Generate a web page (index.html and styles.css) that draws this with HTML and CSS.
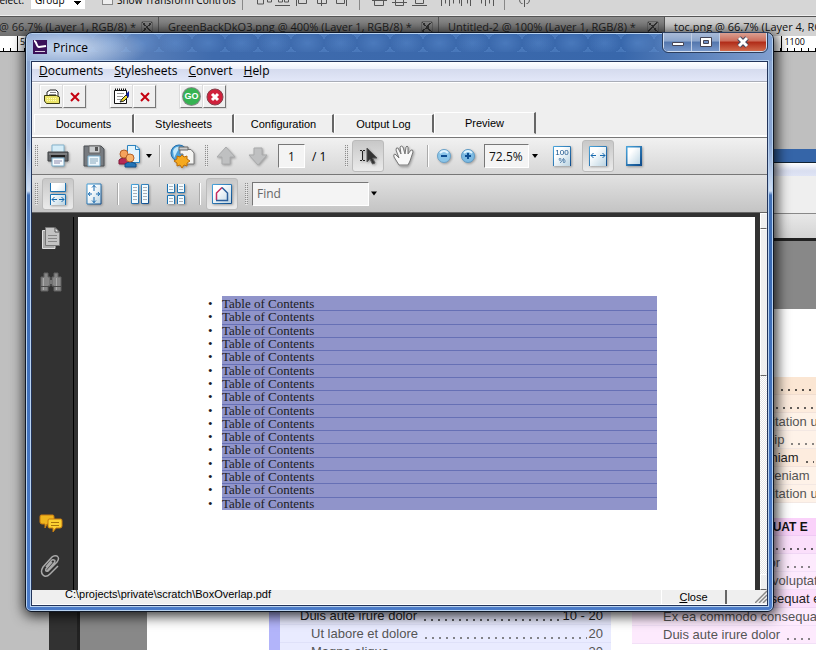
FILE: index.html
```html
<!DOCTYPE html>
<html lang="en">
<head>
<meta charset="utf-8">
<title>Prince</title>
<link rel="stylesheet" href="styles.css">
</head>
<body>
<div class="desktop">
  <div class="editor">
    <div class="options">
      <label for="pick">Select:</label>
      <select id="pick"><option>Group</option></select>
      <label class="check"><input type="checkbox"> Show Transform Controls</label>
      <svg class="align-icons" width="330" height="28" viewBox="0 0 330 28" fill="none" stroke="#555">
        <path d="M9.500 0V22M126.500 0V22M271.500 0V22" stroke="#888"/>
        <path d="M30.500 8V16H24.500V8M38.500 8V14H34.500V8M42 17.500H57M45.500 8V14H49.500V8M51.500 8V14H55.500V8M63.500 8V18M65.500 10.500H73.500V15.500H65.500ZM88.500 8V18M84.500 10.500H93.500V15.500H84.500ZM113.500 8V18M103.500 10.500H111.500V15.500H103.500ZM139 12.500H154M141.500 12V17.500H150.500V12M159 14.500H174M162.500 11.500H170.500V17.500H162.500ZM179 17.500H194M182.500 10.500H190.500V15.500H182.500ZM208.500 8V18M208.500 10.500H212.500V15.500M216.500 8V18M216.500 10.500H220.500V15.500M228.500 8V18M226.500 15.500V10.500H231.500M237.500 8V18M234.500 15.500V10.500H239.500M252.500 8V18M248.500 15.500V10.500H252.500M260.500 8V18M256.500 15.500V10.500H260.500M291.500 10V19M286.500 10.500Q286.500 16 289.500 15.500M296.500 10.500Q296.500 16 293.500 15.500"/>
      </svg>
    </div>
    <div class="tabs">
      <div class="tab first"><span>toc.png @ 66.7% (Layer 1, RGB/8) *</span><button class="x" aria-label="Close tab"></button></div>
      <div class="tab second"><span>GreenBackDkO3.png @ 400% (Layer 1, RGB/8) *</span><button class="x" aria-label="Close tab"></button></div>
      <div class="tab third"><span>Untitled-2 @ 100% (Layer 1, RGB/8) *</span><button class="x" aria-label="Close tab"></button></div>
      <div class="tab active"><span>toc.png @ 66.7% (Layer 4, RGB/8) *</span></div>
    </div>
    <div class="ruler"><span>50</span><span>1100</span></div>
    <div class="canvas">
      <div class="art">
        <div class="art-title"></div>
        <div class="art-menu"></div>
        <div class="art-tools"></div>
        <div class="art-ribbon"></div>
        <div class="art-body">
          <div class="art-side"></div>
          <div class="art-page">
            <div class="toc blue">
              <p class="l1"><span>Duis aute irure dolor</span><i></i><b>10 - 20</b></p>
              <p class="l2"><span>Ut labore et dolore</span><i></i><b>20</b></p>
              <p class="l2"><span>Magna aliqua</span><i></i><b>20</b></p>
            </div>
            <div class="right">
              <div class="toc orange">
                <p class="l0"><span>UT ENIM AD MINIM M</span><i></i></p>
                <p class="l1"><span>Lorem ipsum</span><i></i></p>
                <p class="l2"><span>Quis nostrud exercitation ullamco</span></p>
                <p class="l2"><span>Laboris nisi ut aliquip</span><i></i></p>
                <p class="l1"><span>Ut enim ad minim veniam</span><i></i></p>
                <p class="l2"><span>Ut enim ad minim veniam</span><i></i></p>
                <p class="l2"><span>Quis nostrud exercitation ullamco</span></p>
              </div>
              <div class="toc pink">
                <p class="l0"><span>COMMODO CONSEQUAT E</span><i></i></p>
                <p class="l1"><span>Lorem ipsum</span><i></i></p>
                <p class="l2"><span>Duis aute irure dolor</span><i></i></p>
                <p class="l2"><span>In reprehenderit in voluptate</span></p>
                <p class="l1"><span>Ex ea commodo consequat e</span></p>
                <p class="l2"><span>Ex ea commodo consequat</span></p>
                <p class="l2"><span>Duis aute irure dolor</span><i></i></p>
              </div>
            </div>
          </div>
        </div>
      </div>
    </div>
  </div>

  <div class="window">
    <div class="titlebar">
      <svg width="14" height="14" viewBox="0 0 14 14"><path fill="#3b1259" d="M0 0H14V14H0Z"/><path d="M1 1C4 1 3 7 6 7L13 6" fill="none" stroke="#fff" stroke-width="2"/><path d="M2 11.500H12" stroke="#d8cfe0"/></svg>
      <span class="name">Prince</span>
      <div class="caption">
        <button aria-label="Minimize"><svg width="12" height="12" viewBox="0 0 12 12"><path d="M.5 6.500H11.500V9.500H.5Z" fill="#fff" stroke="#445"/></svg></button>
        <button aria-label="Maximize"><svg width="12" height="12" viewBox="0 0 12 12"><path d="M.5 1.500H11.500V10.500H.5Z" fill="#fff" stroke="#445"/><path d="M3.500 4.500H8.500V7.500H3.500Z" fill="#6f8fc4" stroke="#445"/></svg></button>
        <button class="shut" aria-label="Close window"><svg width="14" height="12" viewBox="0 0 14 12"><path d="M3 2L11 10M11 2L3 10" stroke="#444a60" stroke-width="5"/><path d="M3 2L11 10M11 2L3 10" stroke="#fff" stroke-width="3"/></svg></button>
      </div>
    </div>
    <div class="client">
      <div class="menu">
        <a href="#"><u>D</u>ocuments</a><a href="#"><u>S</u>tylesheets</a><a href="#"><u>C</u>onvert</a><a href="#"><u>H</u>elp</a>
      </div>
      <div class="quick">
        <div class="pair">
          <button aria-label="Open document"><svg width="18" height="16" viewBox="0 0 18 16"><path d="M4 6V3L7 1H13L15 3V7" fill="#fff" stroke="#222"/><path d="M7 3.500H13M6 5.500H13" stroke="#888"/><path d="M1.500 6.500H13.500L16.500 8V14.500H3.500L1.500 12Z" fill="#ece56a" stroke="#3a3a10"/><path d="M4 9.500H14M4 11.500H14" stroke="#fffcc0" stroke-dasharray="1 1"/></svg></button>
          <button aria-label="Remove document"><svg width="10" height="10" viewBox="0 0 10 10"><path d="M1 1L9 9M9 1L1 9" stroke="#c40010" stroke-width="2"/></svg></button>
        </div>
        <div class="pair">
          <button aria-label="Add stylesheet"><svg width="18" height="17" viewBox="0 0 18 17"><path d="M1.500 2.500H13.500V15.500H1.500Z" fill="#fff" stroke="#111"/><path d="M2 1.500H14" stroke="#111" stroke-width="2" stroke-dasharray="1 1"/><path d="M4 5.500H11M4 8.500H10M4 11.500H8" stroke="#999"/><path d="M7 14L9 11L13 7L15 9L11 13Z" fill="#ecd82a" stroke="#222"/><path d="M13 6L16 3V8L15 10Z" fill="#1020a0"/></svg></button>
          <button aria-label="Remove stylesheet"><svg width="10" height="10" viewBox="0 0 10 10"><path d="M1 1L9 9M9 1L1 9" stroke="#c40010" stroke-width="2"/></svg></button>
        </div>
        <div class="pair">
          <button class="go" aria-label="Convert"><span>GO</span></button>
          <button aria-label="Stop"><svg width="18" height="18" viewBox="0 0 18 18"><circle cx="9" cy="9" r="8" fill="#d0213c" stroke="#84404a"/><path d="M6 6L12 12M12 6L6 12" stroke="#fff" stroke-width="3"/></svg></button>
        </div>
      </div>
      <div class="sheet-tabs">
        <button>Documents</button><button>Stylesheets</button><button>Configuration</button><button>Output Log</button><button class="on">Preview</button>
      </div>
      <div class="bar one">
        <i class="grip"></i>
        <button class="tool" aria-label="Print"><svg width="24" height="24" viewBox="0 0 24 24"><path d="M6 1H18V9H6Z" fill="#d5edf8" stroke="#85b4cd"/><path d="M2 8H22V17H2Z" fill="#626569" stroke="#3f4245"/><path d="M3 10H21" stroke="#999"/><path d="M5 12H19" stroke="#222" stroke-width="2"/><path d="M6 14H18V22H6Z" fill="#f8fcff" stroke="#76a9c6"/><path d="M8 17H16M8 19H14" stroke="#88a"/></svg></button>
        <button class="tool" aria-label="Save"><svg width="24" height="24" viewBox="0 0 24 24"><path d="M2 2H19L22 5V22H2Z" fill="#777b80" stroke="#4c5054"/><path d="M7 2H18V9H7Z" fill="#c9ccce" stroke="#666"/><path d="M13 3H16V7H13Z" fill="#555"/><path d="M6 12H18V22H6Z" fill="#eef7fc" stroke="#79afcf"/><path d="M8 15H16M8 17H16M8 19H14" stroke="#87a8bd"/></svg></button>
        <div class="split">
          <button class="tool" aria-label="Share"><svg width="24" height="24" viewBox="0 0 24 24"><path d="M9.500 1.500H18L21.500 5V18.500H9.500Z" fill="#e3f4fc" stroke="#2b83c0"/><path d="M17.500 1.500V5.500H21.500" fill="none" stroke="#2b83c0"/><path d="M1 20V16Q5 12 10 16V20Z" fill="#b72a54" stroke="#801b3a"/><circle cx="6" cy="10" r="4" fill="#f5a35c" stroke="#b5622b"/><path d="M7 23V20Q12 16 18 20V23Z" fill="#2274b8" stroke="#144f87"/><circle cx="12" cy="14" r="4" fill="#f9b36a" stroke="#b5622b"/></svg></button>
          <button class="drop" aria-label="Share options"></button>
        </div>
        <i class="sep"></i>
        <button class="tool" aria-label="Create online"><svg width="26" height="25" viewBox="0 0 26 25"><circle cx="10" cy="9" r="8" fill="#4c9fd7" stroke="#226fae"/><path d="M4 7Q6 2 11 3L8 8L5 14Z" fill="#c2e8fa"/><path d="M11 5.500H22L25 9V20H14V10H11Z" fill="#f4f4f2" stroke="#777"/><path d="M10 3H19V6H10Z" fill="#ccc" stroke="#666"/><path d="M13 11L15 13L18 12L18 15L21 17L18 19V22L15 21L13 24L11 21L8 22V19L5 17L8 15V12L11 13Z" fill="#f5a91e" stroke="#ba6d09"/></svg></button>
        <i class="grip mid"></i>
        <button class="tool small" aria-label="Previous page"><svg width="20" height="20" viewBox="0 0 20 20"><path d="M10 1L19 11H14V18H6V11H1Z" fill="#bfc0c1" stroke="#a9aaab"/></svg></button>
        <button class="tool small" aria-label="Next page"><svg width="20" height="20" viewBox="0 0 20 20"><path d="M10 19L19 9H14V2H6V9H1Z" fill="#bfc0c1" stroke="#a9aaab"/></svg></button>
        <input class="field page-no" id="page" value="1">
        <label class="of" for="page">/ 1</label>
        <i class="grip mid"></i>
        <button class="tool pressed" aria-label="Select text"><svg width="20" height="18" viewBox="0 0 20 18"><path d="M2 3.500H4M5 3.500H7M4.500 4V13M2 13.500H4M5 13.500H7" stroke="#222"/><path d="M9 1V15L12 12L14.500 17L17 16L14.500 11H19Z" fill="#333" stroke="#555"/></svg></button>
        <button class="tool" aria-label="Hand tool"><svg width="24" height="24" viewBox="0 0 24 24"><path d="M7 21L2 13Q1 10 3 10L7 14L4 6Q4 3 6 4L9 10L8 3Q9 1 11 3L13 10L14 3Q15 1 16 3L16 10L19 6Q21 5 21 8L18 17L16 21Z" fill="#f8f8f8" stroke="#777"/><path d="M8 22H16" stroke="#aaa"/></svg></button>
        <i class="sep"></i>
        <button class="tool tiny" aria-label="Zoom out"><svg width="16" height="16" viewBox="0 0 16 16"><circle cx="8" cy="8" r="6.500" fill="#8cc6e9" stroke="#69a1c8"/><path d="M4 5Q8 1 12 5" stroke="#dff4ff" stroke-width="2" fill="none"/><path d="M5 8H11" stroke="#0e4f93" stroke-width="2"/></svg></button>
        <button class="tool tiny" aria-label="Zoom in"><svg width="16" height="16" viewBox="0 0 16 16"><circle cx="8" cy="8" r="6.500" fill="#7dbbe3" stroke="#5f9ac3"/><path d="M4 5Q8 1 12 5" stroke="#dff4ff" stroke-width="2" fill="none"/><path d="M5 8H11M8 5V11" stroke="#0e4f93" stroke-width="2"/></svg></button>
        <div class="split zoom">
          <input class="field" aria-label="Zoom" value="72.5%">
          <button class="drop" aria-label="Zoom levels"></button>
        </div>
        <button class="tool" aria-label="Actual size"><svg width="20" height="22" viewBox="0 0 20 22"><use href="#sheet"/><g class="hundred" text-anchor="middle"><text x="10" y="10">100</text><text x="10" y="18">%</text></g></svg></button>
        <button class="tool pressed" aria-label="Fit width"><svg width="20" height="22" viewBox="0 0 20 22"><use href="#sheet"/><path d="M3 10.500H8M5.500 8L3 10.500L5.500 13M12 10.500H17M14.500 8L17 10.500L14.500 13" fill="none" stroke="#1669ae"/></svg></button>
        <button class="tool" aria-label="Full page"><svg width="16" height="20" viewBox="0 0 16 20"><path d="M.5 .5H15V19H.5Z" fill="url(#paper)" stroke="url(#edge)" stroke-width="2"/></svg></button>
      </div>
      <div class="bar two">
        <i class="grip"></i>
        <button class="tool pressed" aria-label="Scrolling pages"><svg width="18" height="22" viewBox="0 0 18 22"><path d="M1.500 0V8.500H16.500V0M1.500 22V11.500H16.500V22" fill="url(#paper)" stroke="#1b73b4"/><path d="M3 16.500H8M5.500 14L3 16.500L5.500 19M10 16.500H15M12.500 14L15 16.500L12.500 19" fill="none" stroke="#1669ae"/></svg></button>
        <button class="tool" aria-label="One full page"><svg width="16" height="22" viewBox="0 0 16 22"><path d="M1 1H15V21H1Z" fill="url(#paper)" stroke="url(#edge)"/><path d="M8 2V8M6 4.500L8 2.500L10 4.500M8 20V14M6 17.500L8 19.500L10 17.500M2 11H6M4 9L2.500 11L4 13M14 11H10M12 9L13.500 11L12 13" fill="none" stroke="#1669ae"/></svg></button>
        <i class="sep"></i>
        <button class="tool" aria-label="Two pages"><svg width="18" height="22" viewBox="0 0 18 22"><path d="M.5 1.500H7.500V20.500H.5ZM10.500 1.500H17.500V20.500H10.500Z" fill="#f2fafe" stroke="url(#edge)"/><path d="M2 4.500H6M2 7.500H6M2 10.500H6M2 13.500H6M2 16.500H6M12 4.500H16M12 7.500H16M12 10.500H16M12 13.500H16M12 16.500H16" stroke="#a9b0b8"/></svg></button>
        <button class="tool" aria-label="Two pages scrolling"><svg width="18" height="22" viewBox="0 0 18 22"><path d="M.5 1V9.500H7.500V1M10.500 1V9.500H17.500V1M.5 21V12.500H7.500V21M10.500 21V12.500H17.500V21" fill="#f2fafe" stroke="#1b73b4"/><path d="M2 3.500H6M2 6.500H6M2 15.500H6M2 18.500H6M12 3.500H16M12 6.500H16M12 15.500H16M12 18.500H16" stroke="#a9b0b8"/></svg></button>
        <i class="sep"></i>
        <button class="tool pressed" aria-label="Page shape"><svg width="20" height="22" viewBox="0 0 20 22"><path d="M.5 1.500H19.500V20.500H.5Z" fill="url(#paper)" stroke="url(#edge)"/><path d="M4.500 17V10L10 4.500" fill="none" stroke="#c52b5f" stroke-width="1.500"/><path d="M10 4.500L15.500 10V17.500H4" fill="none" stroke="#2b5e9b" stroke-width="1.500"/></svg></button>
        <i class="grip mid"></i>
        <div class="split find">
          <input class="field" aria-label="Find" placeholder="Find">
          <button class="drop" aria-label="Find options"></button>
        </div>
      </div>
      <div class="viewer">
        <div class="side">
          <button aria-label="Pages"><svg width="20" height="24" viewBox="0 0 20 24"><path d="M1.500 4.500H14V22.500H1.500Z" fill="#aaa" stroke="#e0e0e0"/><path d="M4.500 1.500H14L18.500 6V19.500H4.500Z" fill="#c4c4c4" stroke="#777"/><path d="M14 1.500V6H18.500Z" fill="#eee" stroke="#555"/><path d="M7 9.500H16M7 12.500H16M7 15.500H16" stroke="#888"/></svg></button>
          <button aria-label="Search"><svg width="22" height="20" viewBox="0 0 22 20"><path d="M4 1H8V5H10V14H8V19H1V5H4ZM14 1H18V5H21V19H14V14H12V5H14Z" fill="#868686" stroke="#606060"/><path d="M3.500 6V18M16.500 6V18" stroke="#aaa"/><path d="M10 8H12V12H10Z" fill="#777"/><path d="M1 14.500H9M13 14.500H21" stroke="#4a4a4a"/></svg></button>
          <button class="low" aria-label="Comments"><svg width="24" height="20" viewBox="0 0 24 20"><path d="M2 1H14Q15 1 15 3V8Q15 10 13 10H8L6 14V10H3Q1 10 1 8V3Q1 1 2 1Z" fill="#efb51e" stroke="#c87a0e"/><path d="M10 5H22Q23 5 23 7V12Q23 14 21 14H17L14 18V14H10Q9 14 9 12V7Q9 5 10 5Z" fill="#fad032" stroke="#c87a0e"/><path d="M12 8.500H20M12 11.500H20" stroke="#a8740c"/></svg></button>
          <button aria-label="Attachments"><svg width="22" height="24" viewBox="0 0 22 24"><path d="M12 8L6 15Q5 18 8 17L17 8Q20 4 17 2Q14 1 12 3L3 13Q0 18 3 21Q6 24 10 20L18 12M7 17L14 9Q16 6 14 6Q12 5 11 7L6 13" fill="none" stroke="#aaa" stroke-width="1.500"/></svg></button>
        </div>
        <div class="paper">
          <ul>
            <li>Table of Contents</li><li>Table of Contents</li><li>Table of Contents</li><li>Table of Contents</li>
            <li>Table of Contents</li><li>Table of Contents</li><li>Table of Contents</li><li>Table of Contents</li>
            <li>Table of Contents</li><li>Table of Contents</li><li>Table of Contents</li><li>Table of Contents</li>
            <li>Table of Contents</li><li>Table of Contents</li><li>Table of Contents</li><li>Table of Contents</li>
          </ul>
        </div>
        <div class="scroll"><i class="up"></i><i class="thumb"></i><i class="down"></i></div>
      </div>
      <div class="status">
        <span>C:\projects\private\scratch\BoxOverlap.pdf</span>
        <button><u>C</u>lose</button>
        <svg width="12" height="13" viewBox="0 0 12 13"><path d="M0 13L12 1M4 13L12 5M8 13L12 9" stroke="#888" stroke-width="1.500"/></svg>
      </div>
    </div>
  </div>
</div>
<svg class="defs" width="0" height="0">
  <defs>
    <linearGradient id="paper" x1="0" y1="0" x2="1" y2="1"><stop offset="0.300" stop-color="#fff"/><stop offset="1" stop-color="#b9d3e2"/></linearGradient>
    <linearGradient id="edge" x1="0" y1="0" x2="1" y2="1"><stop offset="0" stop-color="#4aa5dc"/><stop offset="1" stop-color="#0f4c8c"/></linearGradient>
    <path id="sheet" d="M1.500 21V1.500H18.500V21" fill="url(#paper)" stroke="url(#edge)"/>
  </defs>
</svg>
</body>
</html>
```
FILE: styles.css
```css
* { box-sizing: border-box; }
html, body { height: 100%; }
body { margin: 0; font-family: "Open Sans", sans-serif; font-size: 12px; color: #000; }
button { padding: 0; border: 0; background: none; font: inherit; color: inherit; }
svg { display: block; flex: none; }
p, ul { margin: 0; padding: 0; }
.defs { position: absolute; }

.desktop { position: relative; height: 100vh; overflow: hidden; background: #bfbfbf; }

/* Image editor behind the window */
.editor { display: flex; flex-direction: column; height: 100%; }
.options { display: flex; align-items: center; flex: none; height: 29px; margin-top: -13px; padding-bottom: 3px; background: #d6d6d6; border-bottom: 1px solid #eee; font-size: 10px; overflow: hidden; }
.options > label:first-child { width: 31px; padding-left: 0; margin-left: -6px; margin-right: 6px; white-space: nowrap; }
.options select { appearance: none; width: 54px; height: 18px; padding: 0 4px; border: 0; border-radius: 0; font: inherit; color: #000; background: linear-gradient(#000, #000) 43px 10px / 7px 1px no-repeat, linear-gradient(#000, #000) 44px 11px / 5px 1px no-repeat, linear-gradient(#000, #000) 45px 12px / 3px 1px no-repeat, linear-gradient(#000, #000) 46px 13px / 1px 1px no-repeat, #fff; }
.check { display: flex; align-items: center; width: 131px; margin-left: 17px; white-space: nowrap; }
.check input { appearance: none; flex: none; width: 11px; height: 11px; margin: 0 4px 0 0; border: 1px solid #888; background: #eee; }
.align-icons { margin-top: 5px; }
.tabs { display: flex; flex: none; height: 20px; border-top: 1px solid #555; background: linear-gradient(#8c8c8c, #707070); font-size: 11px; line-height: 19px; color: #222; }
.tab { display: flex; align-items: center; gap: 5px; flex: none; padding: 0 5px 0 9px; border-right: 1px solid #555; overflow: hidden; white-space: nowrap; justify-content: space-between; }
.first { width: 159px; justify-content: flex-end; }
.second { width: 280px; }
.third { width: 226px; }
.active { flex: 1; background: #d2d2d2; color: #111; border: 0; }
.x { flex: none; width: 12px; height: 12px; border: 1px solid #666; border-radius: 2px; background: linear-gradient(45deg, transparent 45%, #333 45% 55%, transparent 55%), linear-gradient(-45deg, transparent 45%, #333 45% 55%, transparent 55%); }
.ruler { display: flex; justify-content: space-between; flex: none; height: 16px; padding: 0 11px 0 17px; border-bottom: 1px solid #000; background: repeating-linear-gradient(90deg, #000 0 1px, transparent 1px 7px) 3px 12px / 100% 4px no-repeat #fff; font-size: 9px; line-height: 12px; }
.ruler span { height: 15px; padding-left: 2px; border-left: 1px solid #000; }
.canvas { position: relative; flex: 1; overflow: hidden; background: #bfbfbf; }
.art { position: absolute; left: 49px; top: 97px; right: 0; bottom: 0; display: flex; flex-direction: column; background: #888; }
.art-title { flex: none; height: 14px; background: #3565a8; border-bottom: 1px solid #123; }
.art-menu { flex: none; height: 13px; background: linear-gradient(#fff, #d9def0 60%, #dfe4f5); }
.art-tools { flex: none; height: 38px; background: #efefef; border-bottom: 1px solid #888; }
.art-ribbon { flex: none; height: 27px; background: linear-gradient(#e8e8e8, #d4d4d4); border-bottom: 3px solid #222; }
.art-body { flex: 1; display: flex; min-height: 0; }
.art-side { width: 31px; background: #323232; border-right: 3px solid #222; }
.art-page { flex: 1; display: flex; align-items: flex-start; margin: 68px 0 0 67px; padding-left: 122px; background: #fff; overflow: hidden; }
.toc p { display: flex; height: 18px; padding-right: 8px; border-bottom: 1px solid rgba(120, 110, 180, .08); font: 13px/18px "Liberation Sans", sans-serif; color: #555; white-space: nowrap; }
.toc i { flex: 1; height: 2px; margin: 12px 2px 0 7px; background: repeating-linear-gradient(90deg, currentColor 0 2px, transparent 2px 7px); opacity: .7; }
.toc b { font-weight: inherit; }
.right p { padding-right: 0; }
.toc .l0 { padding-left: 20px; font-size: 12px; font-weight: bold; color: #111; }
.toc .l1 { padding-left: 20px; color: #222; }
.toc .l2 { padding-left: 31px; }
.blue { width: 342px; margin-top: 298px; background: #e9ebff; border-left: 11px solid #b2b4fa; }
.right { flex: 1; min-width: 0; margin: 68px 0 0 21px; }
.orange { background: #fef2e8; }
.orange .l0 { background: #fbe6d3; }
.orange .l1 { background: #fdecde; }
.pink { margin-top: 15px; background: #fdeafd; }
.pink .l0 { background: #fad2fa; }
.pink .l1 { background: #fbdffb; }

/* Application window */
.window { position: absolute; left: 25px; top: 32px; right: 42px; bottom: 38px; display: flex; flex-direction: column; padding: 0 5px 5px; border: 1px solid #101826; border-radius: 7px 7px 6px 6px; background: linear-gradient(#8aa4cd 0, #87a3d0 110px, #cfdef2 158px, #4472b6 162px, #3c6cb4 230px, #4b7bc8 100%); box-shadow: inset 0 0 0 1px #b8d2f0, 1px 2px 13px 2px rgba(0, 0, 0, .8); }
.titlebar { display: flex; align-items: flex-start; flex: none; height: 27px; margin: 1px -4px 0; padding: 6px 0 0 6px; border-radius: 5px 5px 0 0; background: radial-gradient(ellipse 80px 24px at 40px 14px, rgba(215, 228, 245, .9), transparent), repeating-radial-gradient(ellipse 17px 12px at 50% 9px, rgba(110, 160, 225, .3), transparent) 0 0 / 33px 18px repeat-x, linear-gradient(90deg, #7f9ccb 0, #3f6bad 25%, #3867ab 80%, #819fcf 100%); }
.name { margin-left: 6px; line-height: 15px; }
.caption { display: flex; margin: -7px 5px 0 auto; border: 1px solid #cfdcef; border-top: 0; border-radius: 0 0 5px 5px; outline: 1px solid #2c3e5e; overflow: hidden; }
.caption button { display: grid; place-items: center; width: 28px; height: 18px; border-right: 1px solid #c0cee4; background: linear-gradient(#a9bbd8, #8ba5cc 45%, #5376ad 50%, #7797c9); }
.caption .shut { width: 46px; border: 0; background: linear-gradient(#dba092, #cc6c5a 45%, #b02a17 50%, #cf6a4c); }
.client { display: flex; flex-direction: column; flex: 1; min-height: 0; border: 1px solid #22345a; outline: 1px solid #b8d2f0; background: #efefef; overflow: hidden; }
.menu { display: flex; flex: none; gap: 11px; height: 20px; padding: 0 7px; border-bottom: 1px solid #a9adb8; background: linear-gradient(#fff, #eef1fa 35%, #d5dbee 38%, #e2e7f8); line-height: 18px; }
.menu a { color: #000; text-decoration: none; }
.quick { display: flex; flex: none; gap: 24px; height: 31px; padding: 2px 8px; border-top: 1px solid #fff; }
.pair { display: flex; }
.pair button { display: grid; place-items: center; width: 23px; height: 23px; border: 1px solid; border-color: #fff #777 #777 #fff; box-shadow: 0 0 0 1px #ddd; }
.go span { width: 17px; height: 17px; border-radius: 50%; background: #36b352; box-shadow: 0 0 0 1px #888; color: #fff; font: bold 9px/17px "Liberation Sans", sans-serif; }
.sheet-tabs { display: flex; align-items: flex-end; flex: none; height: 24px; padding-left: 2px; border-bottom: 2px solid #fff; font: 11px "Liberation Sans", sans-serif; }
.sheet-tabs button { width: 100px; height: 19px; margin-bottom: 2px; border: 1px solid; border-color: #fff #666 transparent #fff; border-right-width: 2px; }
.sheet-tabs .on { width: 102px; height: 22px; margin-bottom: 1px; }
.bar { display: flex; align-items: center; flex: none; gap: 4px; padding-left: 3px; border-top: 1px solid #777; }
.one { height: 37px; background: linear-gradient(#f1f1f1, #d6d6d6); }
.two { height: 39px; border-bottom: 1px solid #666; background: linear-gradient(#e2e2e2, #c4c4c4); }
.grip { width: 3px; height: 22px; background: repeating-linear-gradient(transparent 0 1px, rgba(240, 240, 240, .8) 1px 2px), repeating-linear-gradient(90deg, #8e8e8e 0 1px, transparent 1px 2px); }
.mid { margin-left: 3px; }
.tool { display: grid; place-items: center; flex: none; width: 32px; height: 32px; border: 1px solid transparent; border-radius: 3px; }
.tool svg { filter: drop-shadow(1px 1px 1px rgba(0, 0, 0, .3)); }
.hundred { font: 8px "Liberation Sans", sans-serif; fill: #15518b; }
.small { width: 28px; }
.tiny { width: 20px; }
.pressed { border-color: #bbb; background: linear-gradient(#c8c8c8, #ebebeb); }
.sep { width: 2px; height: 22px; margin: 0 1px 0 3px; border-left: 1px solid #aaa; border-right: 1px solid #fff; }
.split { display: flex; align-items: center; }
.drop { width: 6px; height: 10px; background: #000; clip-path: polygon(0 3px, 100% 3px, 50% 7px); }
.field { height: 24px; padding: 0 4px; border: 1px solid; border-color: #777 #fff #fff #777; border-radius: 0; background: #f4f4f4; font: 12px "Open Sans", sans-serif; color: #111; }
.field::placeholder { color: #666; opacity: 1; }
.page-no { width: 27px; margin-left: 2px; text-align: center; }
.of { width: 29px; padding-left: 3px; }
.zoom { margin: 0 4px 0 2px; gap: 3px; }
.zoom .field { width: 45px; }
.find { gap: 2px; }
.find .field { width: 117px; }

.viewer { display: flex; flex: 1; min-height: 0; padding-top: 4px; background: #323232; }
.side { display: flex; flex-direction: column; align-items: center; gap: 20px; width: 46px; padding: 9px 8px 12px 0; background: linear-gradient(#000, #000) 41px 0 / 1px 100% no-repeat; }
.side button { display: grid; place-items: center; height: 24px; }
.side .low { margin-top: auto; margin-bottom: -2px; }
.paper { flex: 1; padding: 79px 98px 0 144px; background: #fff; }
.paper ul { display: grid; grid-auto-rows: 1fr; height: 214px; padding-top: 1px; background: #9094ca; list-style: none; }
.paper li { min-height: 0; border-top: 1px solid #6670b5; font: 13px/12px "Liberation Serif", serif; color: #1c1c24; }
.paper li:first-child { border-color: transparent; }
.paper li::before { content: "•"; float: left; margin-left: -14px; }
.scroll { display: flex; flex-direction: column; width: 7px; margin: -4px 0 0 5px; background: repeating-conic-gradient(#fff 0 25%, #e4e4e4 0 50%) 0 0 / 2px 2px; }
.scroll i { background: #efefef; border: 1px solid; border-color: #fff #efefef #666 #fff; }
.up, .down { height: 16px; }
.thumb { height: 147px; }
.down { margin-top: auto; }
.status { display: flex; flex: none; height: 15px; border-bottom: 1px solid #fff; font: 11px/9px "Liberation Sans", sans-serif; overflow: hidden; }
.status span { flex: 1; padding-left: 33px; }
.status button { width: 66px; border-left: 1px solid #fff; border-right: 2px solid #666; }
.status svg { margin-left: 28px; }
```
